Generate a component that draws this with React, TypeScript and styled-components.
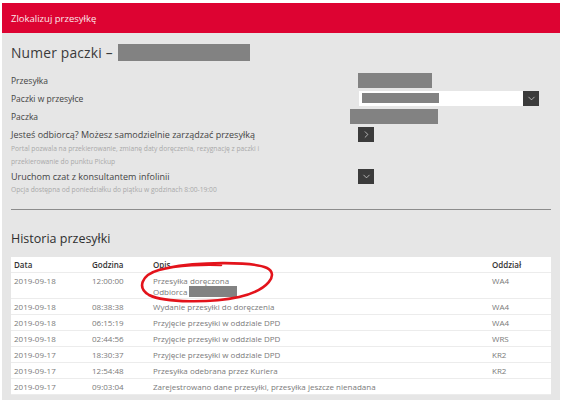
import React from 'react'
import styled, { createGlobalStyle } from 'styled-components'
import { ChevronDown, ChevronRight } from 'lucide-react'

const GlobalStyle = createGlobalStyle`
  html, body {
    margin: 0;
    padding: 0;
    background: #ffffff;
  }
  body {
    font-family: "Open Sans", "Liberation Sans", sans-serif;
  }
`

const Page = styled.div`
  width: 558px;
  height: 397px;
  margin: 3px 0 0 2px;
  background: #e6e6e6;
  overflow: hidden;
`

const Header = styled.div`
  height: 30px;
  background: #dd0332;
  color: #fbe7ea;
  font-size: 9.5px;
  display: flex;
  align-items: center;
  padding-left: 9px;
`

const Body = styled.div`
  padding: 9px 9px 0 9px;
`

const Title = styled.h1`
  margin: 0;
  display: flex;
  align-items: center;
  gap: 5px;
  height: 20px;
  font-size: 13.8px;
  font-weight: 400;
  color: #3a3a3a;
  letter-spacing: 0.2px;
`

const Redacted = styled.span<{ $w: number; $h: number }>`
  display: inline-block;
  width: ${({ $w }) => $w}px;
  height: ${({ $h }) => $h}px;
  background: #828282;
`

const InfoList = styled.div`
  margin-top: 9px;
`

const InfoRow = styled.div<{ $h?: number }>`
  display: grid;
  grid-template-columns: 339px 1fr;
  align-items: center;
  height: ${({ $h }) => $h ?? 18}px;
`

const Label = styled.span<{ $big?: boolean }>`
  font-size: ${({ $big }) => ($big ? 9 : 8.5)}px;
  color: #444;
`

const Value = styled.div<{ $indent?: number }>`
  display: flex;
  align-items: center;
  padding-left: ${({ $indent }) => $indent ?? 8}px;
`

const Select = styled.div`
  display: flex;
  align-items: center;
  justify-content: space-between;
  width: 180px;
  height: 15px;
  background: #fff;
  padding-left: 3px;
  box-sizing: border-box;
`

const IconButton = styled.span`
  width: 16px;
  height: 15px;
  background: #3b3b3b;
  color: #e6e6e6;
  display: flex;
  align-items: center;
  justify-content: center;
`

const Note = styled.p`
  margin: -1px 0 0;
  font-size: 6.7px;
  line-height: 13px;
  color: #a9a9a9;
  white-space: nowrap;
`

const SmallNote = styled(Note)`
  margin: 0;
  line-height: 10px;
`

const Divider = styled.hr`
  margin: 14px 0 0;
  border: 0;
  border-top: 1px solid #8c8c8c;
`

const SectionTitle = styled.h2`
  margin: 19px 0 0;
  height: 20px;
  line-height: 20px;
  font-size: 12.5px;
  font-weight: 400;
  color: #2f2f2f;
`

const TableWrap = styled.div`
  position: relative;
  margin-top: 8px;
  background: #fff;
`

const Row = styled.div<{ $head?: boolean; $tall?: boolean }>`
  display: grid;
  grid-template-columns: 78px 61px 339px 1fr;
  align-items: ${({ $tall }) => ($tall ? 'start' : 'center')};
  height: ${({ $tall }) => ($tall ? 26 : 16)}px;
  border-bottom: 1px solid #ececec;
  box-sizing: border-box;
  font-size: 8px;
  color: ${({ $head }) => ($head ? '#333' : '#7a7a7a')};
  font-weight: ${({ $head }) => ($head ? 600 : 400)};
  &:last-child {
    border-bottom: 0;
  }
`

const Cell = styled.div<{ $tall?: boolean }>`
  padding-left: 3px;
  padding-top: ${({ $tall }) => ($tall ? 3 : 0)}px;
  line-height: 10px;
  white-space: nowrap;
`

const Recipient = styled.div`
  display: flex;
  align-items: center;
  gap: 2px;
`

const Annotation = styled.svg`
  position: absolute;
  left: 126px;
  top: 3px;
  pointer-events: none;
`

const rows = [
  ['2019-09-18', '08:38:38', 'Wydanie przesyłki do doręczenia', 'WA4'],
  ['2019-09-18', '06:15:19', 'Przyjęcie przesyłki w oddziale DPD', 'WA4'],
  ['2019-09-18', '02:44:56', 'Przyjęcie przesyłki w oddziale DPD', 'WRS'],
  ['2019-09-17', '18:30:37', 'Przyjęcie przesyłki w oddziale DPD', 'KR2'],
  ['2019-09-17', '12:54:48', 'Przesyłka odebrana przez Kuriera', 'KR2'],
  ['2019-09-17', '09:03:04', 'Zarejestrowano dane przesyłki, przesyłka jeszcze nienadana', ''],
]

export default function App() {
  return (
    <>
      <GlobalStyle />
      <Page>
        <Header>Zlokalizuj przesyłkę</Header>
        <Body>
          <Title>
            Numer paczki –
            <Redacted $w={132} $h={17} />
          </Title>

          <InfoList>
            <InfoRow>
              <Label>Przesyłka</Label>
              <Value>
                <Redacted $w={74} $h={15} />
              </Value>
            </InfoRow>
            <InfoRow>
              <Label>Paczki w przesyłce</Label>
              <Value $indent={9}>
                <Select>
                  <Redacted $w={77} $h={10} />
                  <IconButton>
                    <ChevronDown size={11} strokeWidth={1.5} />
                  </IconButton>
                </Select>
              </Value>
            </InfoRow>
            <InfoRow>
              <Label>Paczka</Label>
              <Value $indent={0}>
                <Redacted $w={88} $h={15} />
              </Value>
            </InfoRow>
            <InfoRow>
              <Label $big>Jesteś odbiorcą? Możesz samodzielnie zarządzać przesyłką</Label>
              <Value>
                <IconButton>
                  <ChevronRight size={11} strokeWidth={1.5} />
                </IconButton>
              </Value>
            </InfoRow>
            <Note>
              Portal pozwala na przekierowanie, zmianę daty doręczenia, rezygnację z paczki i
              <br />
              przekierowanie do punktu Pickup
            </Note>
            <InfoRow $h={17}>
              <Label $big>Uruchom czat z konsultantem infolinii</Label>
              <Value>
                <IconButton>
                  <ChevronDown size={11} strokeWidth={1.5} />
                </IconButton>
              </Value>
            </InfoRow>
            <SmallNote>Opcja dostępna od poniedziałku do piątku w godzinach 8:00-19:00</SmallNote>
          </InfoList>

          <Divider />
          <SectionTitle>Historia przesyłki</SectionTitle>

          <TableWrap>
            <Row $head>
              <Cell>Data</Cell>
              <Cell>Godzina</Cell>
              <Cell>Opis</Cell>
              <Cell>Oddział</Cell>
            </Row>
            <Row $tall>
              <Cell $tall>2019-09-18</Cell>
              <Cell $tall>12:00:00</Cell>
              <Cell $tall>
                <div>Przesyłka doręczona</div>
                <Recipient>
                  Odbiorca
                  <Redacted $w={48} $h={11} />
                </Recipient>
              </Cell>
              <Cell $tall>WA4</Cell>
            </Row>
            {rows.map(([date, time, desc, branch]) => (
              <Row key={date + time}>
                <Cell>{date}</Cell>
                <Cell>{time}</Cell>
                <Cell>{desc}</Cell>
                <Cell>{branch}</Cell>
              </Row>
            ))}
            <Annotation width="144" height="44" viewBox="0 0 144 44">
              <path
                d="M30 8 C60 2 114 1 130 8 C142 14 132 30 102 37 C74 43 28 43 12 35 C0 28 4 15 22 10 C40 5 70 4 84 5"
                fill="none"
                stroke="#e3131b"
                strokeWidth="2.6"
                strokeLinecap="round"
              />
            </Annotation>
          </TableWrap>
        </Body>
      </Page>
    </>
  )
}
